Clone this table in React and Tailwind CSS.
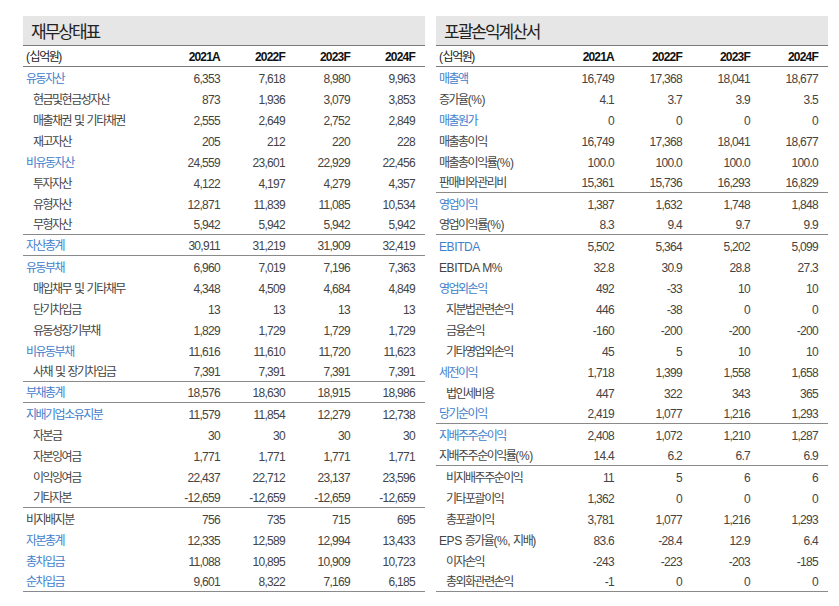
import React from 'react';

const FONT = "font-['Liberation_Sans','Noto_Sans_CJK_KR',sans-serif]";

// kind: 'b' = blue section, 'i' = indented sub row, 'n' = plain
const balance = [
  ['b', '유동자산', ['6,353', '7,618', '8,980', '9,963']],
  ['i', '현금및현금성자산', ['873', '1,936', '3,079', '3,853']],
  ['i', '매출채권 및 기타채권', ['2,555', '2,649', '2,752', '2,849']],
  ['i', '재고자산', ['205', '212', '220', '228']],
  ['b', '비유동자산', ['24,559', '23,601', '22,929', '22,456']],
  ['i', '투자자산', ['4,122', '4,197', '4,279', '4,357']],
  ['i', '유형자산', ['12,871', '11,839', '11,085', '10,534']],
  ['i', '무형자산', ['5,942', '5,942', '5,942', '5,942'], true],
  ['b', '자산총계', ['30,911', '31,219', '31,909', '32,419'], true],
  ['b', '유동부채', ['6,960', '7,019', '7,196', '7,363']],
  ['i', '매입채무 및 기타채무', ['4,348', '4,509', '4,684', '4,849']],
  ['i', '단기차입금', ['13', '13', '13', '13']],
  ['i', '유동성장기부채', ['1,829', '1,729', '1,729', '1,729']],
  ['b', '비유동부채', ['11,616', '11,610', '11,720', '11,623']],
  ['i', '사채 및 장기차입금', ['7,391', '7,391', '7,391', '7,391'], true],
  ['b', '부채총계', ['18,576', '18,630', '18,915', '18,986'], true],
  ['b', '지배기업소유지분', ['11,579', '11,854', '12,279', '12,738']],
  ['i', '자본금', ['30', '30', '30', '30']],
  ['i', '자본잉여금', ['1,771', '1,771', '1,771', '1,771']],
  ['i', '이익잉여금', ['22,437', '22,712', '23,137', '23,596']],
  ['i', '기타자본', ['-12,659', '-12,659', '-12,659', '-12,659'], true],
  ['n', '비지배지분', ['756', '735', '715', '695']],
  ['b', '자본총계', ['12,335', '12,589', '12,994', '13,433']],
  ['b', '총차입금', ['11,088', '10,895', '10,909', '10,723']],
  ['b', '순차입금', ['9,601', '8,322', '7,169', '6,185'], true],
];

const income = [
  ['b', '매출액', ['16,749', '17,368', '18,041', '18,677']],
  ['n', '증가율(%)', ['4.1', '3.7', '3.9', '3.5']],
  ['b', '매출원가', ['0', '0', '0', '0']],
  ['n', '매출총이익', ['16,749', '17,368', '18,041', '18,677']],
  ['n', '매출총이익률(%)', ['100.0', '100.0', '100.0', '100.0']],
  ['n', '판매비와관리비', ['15,361', '15,736', '16,293', '16,829'], true],
  ['b', '영업이익', ['1,387', '1,632', '1,748', '1,848']],
  ['n', '영업이익률(%)', ['8.3', '9.4', '9.7', '9.9'], true],
  ['b', 'EBITDA', ['5,502', '5,364', '5,202', '5,099']],
  ['n', 'EBITDA M%', ['32.8', '30.9', '28.8', '27.3']],
  ['b', '영업외손익', ['492', '-33', '10', '10']],
  ['i', '지분법관련손익', ['446', '-38', '0', '0']],
  ['i', '금융손익', ['-160', '-200', '-200', '-200']],
  ['i', '기타영업외손익', ['45', '5', '10', '10']],
  ['b', '세전이익', ['1,718', '1,399', '1,558', '1,658']],
  ['i', '법인세비용', ['447', '322', '343', '365']],
  ['b', '당기순이익', ['2,419', '1,077', '1,216', '1,293'], true],
  ['b', '지배주주순이익', ['2,408', '1,072', '1,210', '1,287']],
  ['n', '지배주주순이익률(%)', ['14.4', '6.2', '6.7', '6.9'], true],
  ['i', '비지배주주순이익', ['11', '5', '6', '6']],
  ['i', '기타포괄이익', ['1,362', '0', '0', '0']],
  ['i', '총포괄이익', ['3,781', '1,077', '1,216', '1,293']],
  ['n', 'EPS 증가율(%, 지배)', ['83.6', '-28.4', '12.9', '6.4']],
  ['i', '이자손익', ['-243', '-223', '-203', '-185']],
  ['i', '총외화관련손익', ['-1', '0', '0', '0'], true],
];

const years = ['2021A', '2022F', '2023F', '2024F'];

// hangul runs get tight tracking, latin/punctuation keeps near normal spacing
const Label = ({ text }) =>
  text.split(/([가-힣]+)/).filter(Boolean).map((part, i) =>
    /[가-힣]/.test(part) ? (
      <span key={i} className="tracking-[-1.5px]">{part}</span>
    ) : (
      <span key={i} className="tracking-[-0.4px]">{part}</span>
    )
  );

const Table = ({ title, rows, width, cols }) => (
  <div className={`${width} flex flex-col ${FONT}`}>
    <div className="h-[30px] bg-[#e6e6e6] border-b border-[#7a7a7a] flex items-center pl-[8px] pt-[1px] text-[17px] tracking-[-2px] text-[#222] font-['Noto_Sans_CJK_KR',sans-serif]">
      {title}
    </div>
    <div className={`grid ${cols} h-[21px] items-center pt-[1px] border-b border-[#7a7a7a] pr-[10px] text-[12px] text-[#222]`}>
      <span className="pl-[3px]"><Label text="(십억원)" /></span>
      {years.map((y) => (
        <span key={y} className="text-right font-bold text-[#111] tracking-[-0.8px]">{y}</span>
      ))}
    </div>
    {rows.map(([kind, label, vals, line]) => (
      <div
        key={label}
        className={`grid ${cols} h-[21px] items-center pt-[2px] pr-[10px] text-[12px] text-[#444] ${line ? 'border-b border-[#8a8a8a]' : ''}`}
      >
        <span
          className={`whitespace-nowrap ${kind === 'i' ? 'pl-[10px]' : 'pl-[3px]'} ${kind === 'b' ? 'text-[#3f80cc]' : ''}`}
        >
          <Label text={label} />
        </span>
        {vals.map((v, i) => (
          <span key={i} className="text-right tracking-[-0.7px]">{v}</span>
        ))}
      </div>
    ))}
  </div>
);

export default function App() {
  return (
    <div className="w-[839px] h-[606px] bg-white flex gap-[11px] pt-[16px] pl-[23px]">
      <Table title="재무상태표" rows={balance} width="w-[402px]" cols="grid-cols-[1fr_65px_65px_65px_65px]" />
      <Table title="포괄손익계산서" rows={income} width="w-[392px]" cols="grid-cols-[1fr_68px_68px_68px_68px]" />
    </div>
  );
}
